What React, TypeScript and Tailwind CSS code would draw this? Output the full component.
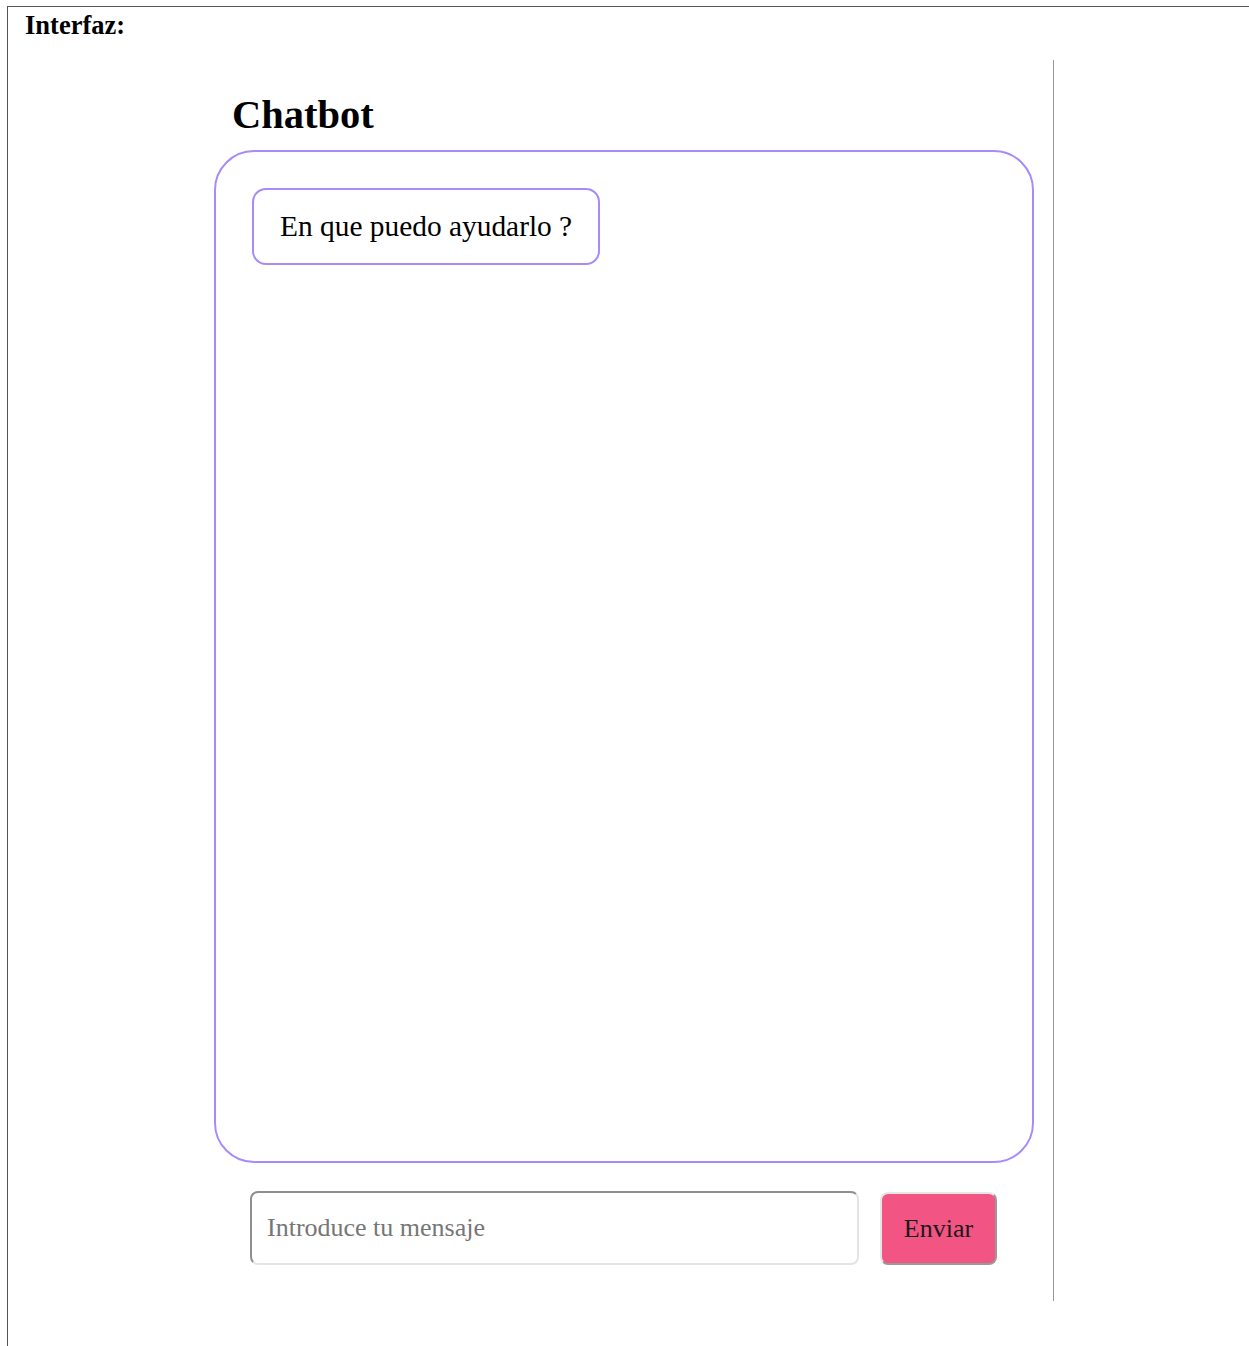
import { useState } from 'react'

const serif = "font-['Liberation_Serif','Times_New_Roman',serif]"

function Bubble({ text }: { text: string }) {
  return (
    <div className="self-start rounded-[14px] border-2 border-[#a78bfa] px-[26px] py-[20px] text-[29.4px] leading-[33px] text-black">
      {text}
    </div>
  )
}

export default function App() {
  const [mensaje, setMensaje] = useState('')
  const mensajes = ['En que puedo ayudarlo ?']

  return (
    <div className={`h-[1346px] w-full overflow-hidden bg-white pl-[7px] pt-[6px] ${serif}`}>
      <div className="h-full border-l border-t border-[#555]">
        <div className="pl-[17px] pt-[3px] text-[26.5px] font-bold leading-[30px] text-black">Interfaz:</div>

        {/* Chat column */}
        <div className="ml-[186px] mt-[20px] flex h-[1241px] w-[860px] flex-col border-r border-[#9a9a9a] pb-[36px] pl-[20px] pr-[19px] pt-[32px]">
          <h1 className="mb-[12px] pl-[18px] text-[40.5px] font-bold leading-[46px] text-black">Chatbot</h1>

          <div className="flex h-[1013px] flex-col gap-3 rounded-[40px] border-2 border-[#a78bfa] p-[36px]">
            {mensajes.map((m) => (
              <Bubble key={m} text={m} />
            ))}
          </div>

          <div className="mt-[28px] flex items-center gap-[21px] px-[36px]">
            <input
              value={mensaje}
              onChange={(e) => setMensaje(e.target.value)}
              placeholder="Introduce tu mensaje"
              className={`h-[74px] w-[609px] rounded-[8px] border-2 border-b-[#e4e4e4] border-l-[#8f8f8f] border-r-[#e4e4e4] border-t-[#8f8f8f] bg-white pl-[15px] text-[26px] text-black outline-none placeholder:text-[#767676] ${serif}`}
            />
            <button
              className={`h-[73px] w-[117px] rounded-[8px] border-2 border-b-[#9a9a9a] border-l-[#e6e6e6] border-r-[#9a9a9a] border-t-[#e6e6e6] bg-[#f25483] text-[26px] text-[#1a1a1a] ${serif}`}
            >
              Enviar
            </button>
          </div>
        </div>
      </div>
    </div>
  )
}
